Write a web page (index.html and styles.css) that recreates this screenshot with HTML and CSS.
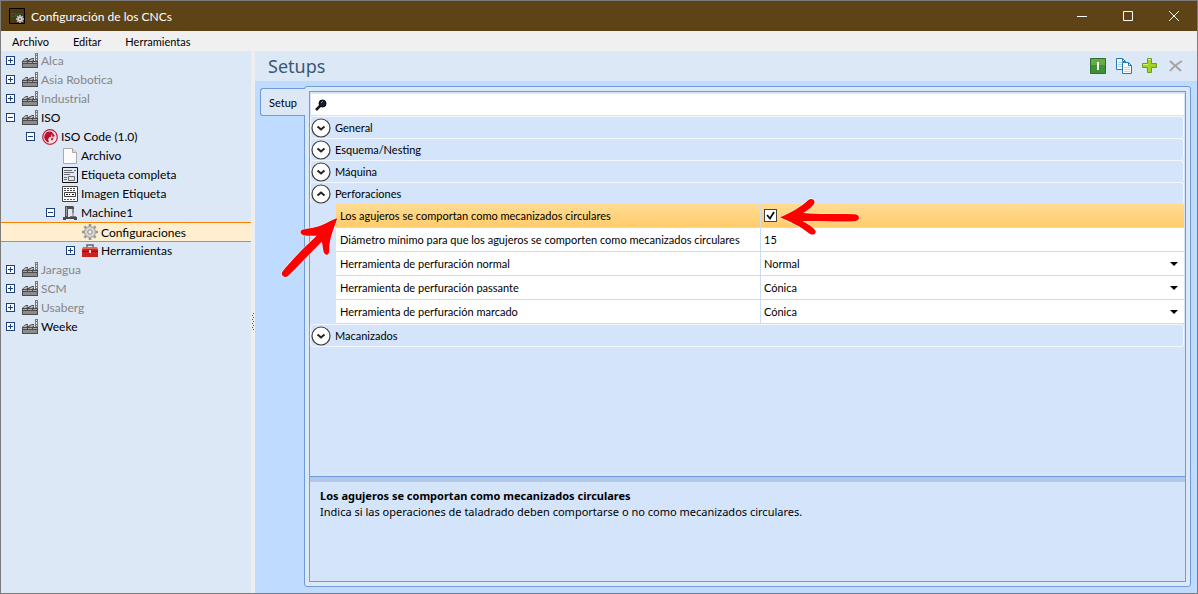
FILE: index.html
```html
<!DOCTYPE html>
<html lang="es">
<head>
    <meta charset="UTF-8">
    <meta name="viewport" content="width=device-width, initial-scale=1.0">
    <title>Configuración de los CNCs</title>
    <link rel="stylesheet" href="styles.css">
</head>
<body>
    <!-- Shared icons -->
    <svg class="icon-defs" aria-hidden="true">
        <symbol id="icon-factory" viewBox="0 0 16 16">
            <path d="M13 0h3v9h-3z" fill="#777"/>
            <path d="M14 1h1v1h-1zM14 3h1v2h-1zM14 6h1v1h-1z" fill="#e4e4e4"/>
            <path d="M0 8l4-3h2v2l4-2h2v3h4v7H0z" fill="#4c4c4c"/>
            <path d="M1 8l3-2h2L4 8zM7 8l3-2h2l-2 2z" fill="#c4c4c4"/>
            <path d="M1 9h4v1H1zM6 9h4v1H6zM11 9h4v1h-4z" fill="#a8a8a8"/>
            <path d="M1 11h14v3H1z" fill="#8c8c8c"/>
        </symbol>
        <symbol id="icon-chevron" viewBox="0 0 20 20">
            <circle cx="10" cy="10" r="9" fill="#fff" stroke="#3c3c3c" stroke-width="1.200"/>
            <path d="M6.500 8.500l3.500 3 3.500-3" fill="none" stroke="#222" stroke-width="2"/>
        </symbol>
    </svg>

    <div class="window">
        <header class="title-bar">
            <svg class="app-icon" viewBox="0 0 16 16">
                <path d="M.5.500h15v15H.500z" fill="#4a3716" stroke="#000"/>
                <path d="M5 5.500H2.500v3H5M6.500 9V5.500L9 9V5.500M13 5.500h-2.500v3" stroke="#087a20" fill="none"/>
                <path d="M11 7v8M7 11h8M8.200 8.200l5.600 5.600M13.800 8.200l-5.600 5.600" stroke="#c8c8c8" stroke-width="1.500"/>
                <circle cx="11" cy="11" r="2.500" fill="#eee" stroke="#aaa"/>
                <circle cx="11" cy="11" r="1" fill="#555"/>
            </svg>
            <h1>Configuración de los CNCs</h1>
            <div class="window-buttons">
                <button type="button" aria-label="Minimizar"><svg viewBox="0 0 12 12"><path d="M1 6.500h10"/></svg></button>
                <button type="button" aria-label="Maximizar"><svg viewBox="0 0 12 12"><path d="M1.500 1.500h9v9h-9z"/></svg></button>
                <button type="button" aria-label="Cerrar"><svg viewBox="0 0 12 12"><path d="M1 1l10 10M11 1L1 11"/></svg></button>
            </div>
        </header>

        <nav class="menu-bar">
            <button type="button">Archivo</button>
            <button type="button">Editar</button>
            <button type="button">Herramientas</button>
        </nav>

        <div class="workspace">
            <ul class="tree">
                <li class="node level-1 muted"><button type="button" class="expander plus" aria-label="Expandir"></button><svg class="node-icon"><use href="#icon-factory"/></svg><span>Alca</span></li>
                <li class="node level-1 muted"><button type="button" class="expander plus" aria-label="Expandir"></button><svg class="node-icon"><use href="#icon-factory"/></svg><span>Asia Robotica</span></li>
                <li class="node level-1 muted"><button type="button" class="expander plus" aria-label="Expandir"></button><svg class="node-icon"><use href="#icon-factory"/></svg><span>Industrial</span></li>
                <li class="node level-1"><button type="button" class="expander" aria-label="Contraer"></button><svg class="node-icon"><use href="#icon-factory"/></svg><span>ISO</span></li>
                <li class="node level-2"><button type="button" class="expander" aria-label="Contraer"></button>
                    <svg class="node-icon" viewBox="0 0 16 16">
                        <circle cx="8" cy="8" r="7.300" fill="#f1dfe6" stroke="#c41e3f" stroke-width="1.200"/>
                        <path d="M8 2.500a5.500 5.500 0 0 0-4 9.500l2 1.500 1-1-1-2 1.500-2.500H9V6l2-1-1-2z" fill="#b9112f"/>
                        <path d="M10.500 3.500l2.500 3-2 2-1.500-2zM9 9h2.500l-1 2.500-1.500-.5z" fill="#c22b48"/>
                    </svg><span>ISO Code (1.0)</span></li>
                <li class="node level-3"><i class="no-expander"></i>
                    <svg class="node-icon" viewBox="0 0 16 16">
                        <path d="M1.500.500h9l4 4v11h-13z" fill="#fbfbfb" stroke="#a9a9a9"/>
                        <path d="M10.500.500v4h4" fill="#ddd" stroke="#a9a9a9"/>
                    </svg><span>Archivo</span></li>
                <li class="node level-3"><i class="no-expander"></i>
                    <svg class="node-icon" viewBox="0 0 16 16">
                        <path d="M.5.500h15v15H.500z" fill="#e2e7ef" stroke="#111"/>
                        <path d="M2 3.500h8M2 5.500h10M2 7.500h6M2 10.500h3M2 12.500h3M12 3.500h2M6.500 9.500h6v4h-6z" fill="none" stroke="#6b6f75"/>
                    </svg><span>Etiqueta completa</span></li>
                <li class="node level-3"><i class="no-expander"></i>
                    <svg class="node-icon" viewBox="0 0 16 16">
                        <path d="M.5.500h15v15H.500z" fill="#fff" stroke="#444"/>
                        <path d="M2 2.500h12M2 4.500h12" stroke="#444" stroke-dasharray="2 1"/>
                        <path d="M2.500 6.500h11v4h-11z" fill="#fff" stroke="#444"/>
                        <path d="M4 8.500h2M7 8.500h1M10 8.500h2" stroke="#111"/>
                        <path d="M2 13.500h12" stroke="#d22" stroke-dasharray="2 1"/>
                    </svg><span>Imagen Etiqueta</span></li>
                <li class="node level-3"><button type="button" class="expander" aria-label="Contraer"></button>
                    <svg class="node-icon" viewBox="0 0 16 16">
                        <path d="M3 1h8l1 1v3h-2V4H6v8H3z" fill="#505050"/>
                        <path d="M4.500 2v9" stroke="#999"/>
                        <path d="M10 4h2v4h-2z" fill="#888"/>
                        <path d="M11 8v3M8 11.500h6" stroke="#777"/>
                        <path d="M1 12h14v3h-3v-1H4v1H1z" fill="#4b4b4b"/>
                    </svg><span>Machine1</span></li>
                <li class="node level-4 selected"><i class="no-expander"></i>
                    <svg class="node-icon" viewBox="0 0 16 16">
                        <path d="M8 0v16M0 8h16M2.400 2.400l11.200 11.200M13.600 2.400L2.400 13.600" stroke="#959595" stroke-width="2.600"/>
                        <circle cx="8" cy="8" r="5.500" fill="#d4d4d4" stroke="#a0a0a0"/>
                        <circle cx="8" cy="8" r="2.200" fill="#fff0d0" stroke="#8c8c8c"/>
                    </svg><span>Configuraciones</span></li>
                <li class="node level-4"><button type="button" class="expander plus" aria-label="Expandir"></button>
                    <svg class="node-icon" viewBox="0 0 16 16">
                        <path d="M5 4.500V2h6v2.500" fill="none" stroke="#666" stroke-width="1.500"/>
                        <path d="M1 4h14l1 3v7H0V7z" fill="#cf2020"/>
                        <path d="M1 4h14v2H1z" fill="#ea6258"/>
                        <path d="M0 8h16v1H0z" fill="#8f0c0c"/>
                        <path d="M7 7h2v3H7z" fill="#ddd"/>
                    </svg><span>Herramientas</span></li>
                <li class="node level-1 muted"><button type="button" class="expander plus" aria-label="Expandir"></button><svg class="node-icon"><use href="#icon-factory"/></svg><span>Jaragua</span></li>
                <li class="node level-1 muted"><button type="button" class="expander plus" aria-label="Expandir"></button><svg class="node-icon"><use href="#icon-factory"/></svg><span>SCM</span></li>
                <li class="node level-1 muted"><button type="button" class="expander plus" aria-label="Expandir"></button><svg class="node-icon"><use href="#icon-factory"/></svg><span>Usaberg</span></li>
                <li class="node level-1"><button type="button" class="expander plus" aria-label="Expandir"></button><svg class="node-icon"><use href="#icon-factory"/></svg><span>Weeke</span></li>
            </ul>

            <div class="splitter">
                <svg viewBox="0 0 4 20"><path d="M2 1h1v1H2zM1 3h1v1H1zM2 5h1v1H2zM1 7h1v1H1zM2 9h1v1H2zM1 11h1v1H1zM2 13h1v1H2zM1 15h1v1H1zM2 17h1v1H2z" fill="#36598c"/></svg>
            </div>

            <main class="content">
                <div class="content-header">
                    <h2>Setups</h2>
                    <div class="toolbar">
                        <button type="button" aria-label="Activar">
                            <svg viewBox="0 0 16 16">
                                <path d="M.5.500h15v15H.500z" fill="#3f9136" stroke="#2a7034"/>
                                <path d="M1 1h14v6H1z" fill="#65ad43"/>
                                <path d="M7 4h2v8H7z" fill="#fff"/>
                            </svg>
                        </button>
                        <button type="button" aria-label="Copiar">
                            <svg viewBox="0 0 16 16">
                                <path d="M.5.500h6l3 3v8h-9z" fill="#fff" stroke="#2478b5"/>
                                <path d="M6.500.500v3h3" fill="none" stroke="#2478b5"/>
                                <path d="M2 4.500h4M2 6.500h4M2 8.500h4" stroke="#a5cfe6"/>
                                <path d="M6.500 4.500h6l3 3v8h-9z" fill="#fff" stroke="#2478b5"/>
                                <path d="M12.500 4.500v3h3" fill="none" stroke="#2478b5"/>
                                <path d="M8 9.500h6M8 11.500h6M8 13.500h6" stroke="#b5d8ea"/>
                            </svg>
                        </button>
                        <button type="button" aria-label="Agregar">
                            <svg viewBox="0 0 16 16">
                                <path d="M5.500.500h4v5h5v4h-5v5h-4v-5h-5v-4h5z" fill="#a3d321" stroke="#69a01b"/>
                                <path d="M6 1.500h3M1 6.500h5" stroke="#d9f37e"/>
                            </svg>
                        </button>
                        <button type="button" aria-label="Eliminar" disabled>
                            <svg viewBox="0 0 16 16">
                                <path d="M2 3l11 10M14 3C9 6 5 9 2 13" fill="none" stroke="#a3a3a3" stroke-width="2"/>
                            </svg>
                        </button>
                    </div>
                </div>

                <div class="tab-area">
                    <button type="button" class="tab">Setup</button>
                    <section class="tab-page">
                        <div class="property-panel">
                            <label class="search">
                                <svg viewBox="0 0 12 12">
                                    <path d="M1 11l4-4" stroke="#1a1a1a" stroke-width="2.500"/>
                                    <circle cx="7.500" cy="4.500" r="3.500" fill="#17202a" stroke="#000"/>
                                    <path d="M6 4l2-2" stroke="#7893a5"/>
                                </svg>
                                <input type="text" aria-label="Buscar">
                            </label>

                            <div class="groups">
                                <button type="button" class="group"><svg><use href="#icon-chevron"/></svg>General</button>
                                <button type="button" class="group"><svg><use href="#icon-chevron"/></svg>Esquema/Nesting</button>
                                <button type="button" class="group"><svg><use href="#icon-chevron"/></svg>Máquina</button>
                                <button type="button" class="group open"><svg><use href="#icon-chevron"/></svg>Perforaciones</button>
                                <div class="properties">
                                    <div class="property active">
                                        <label for="holesAsMilling">Los agujeros se comportan como mecanizados circulares</label>
                                        <div class="value"><input type="checkbox" id="holesAsMilling" checked>
                                            <svg class="arrow arrow-check" viewBox="117 21 243 120"><path d="M120 82C150 70 185 50 205 30C215 22 228 30 222 42C212 55 200 62 190 69C240 74 290 70 345 73C362 76 360 92 345 94C290 96 240 92 187 93C205 103 220 112 227 123C228 134 215 137 207 130C180 108 150 95 120 82Z"/></svg>
                                        </div>
                                        <svg class="arrow arrow-label" viewBox="60 105 180 195"><path d="M232 115C210 120 190 138 165 142C150 146 128 147 123 152C118 162 128 167 140 167L170 167C130 205 95 240 67 275C60 288 75 296 84 288C115 258 150 220 185 185C190 200 188 215 195 222C203 228 209 220 208 205C208 175 222 145 232 115Z"/></svg>
                                    </div>
                                    <div class="property">
                                        <label for="minDiameter">Diámetro mínimo para que los agujeros se comporten como mecanizados circulares</label>
                                        <div class="value"><input type="text" id="minDiameter" value="15"></div>
                                    </div>
                                    <div class="property">
                                        <label for="toolNormal">Herramienta de perfuración normal</label>
                                        <div class="value"><select id="toolNormal"><option>Normal</option><option>Cónica</option></select></div>
                                    </div>
                                    <div class="property">
                                        <label for="toolThrough">Herramienta de perfuración passante</label>
                                        <div class="value"><select id="toolThrough"><option>Cónica</option><option>Normal</option></select></div>
                                    </div>
                                    <div class="property">
                                        <label for="toolMark">Herramienta de perfuración marcado</label>
                                        <div class="value"><select id="toolMark"><option>Cónica</option><option>Normal</option></select></div>
                                    </div>
                                </div>
                                <button type="button" class="group"><svg><use href="#icon-chevron"/></svg>Macanizados</button>
                            </div>

                            <div class="description">
                                <h3>Los agujeros se comportan como mecanizados circulares</h3>
                                <p>Indica si las operaciones de taladrado deben comportarse o no como mecanizados circulares.</p>
                            </div>
                        </div>
                    </section>
                </div>
            </main>
        </div>
    </div>
</body>
</html>
```
FILE: styles.css
```css
* {
    box-sizing: border-box;
}
body {
    margin: 0;
    font-family: Lato, "Noto Sans", sans-serif;
    font-size: 12px;
    color: #000;
}
button, input, select {
    font: inherit;
    color: inherit;
    border: none;
    background: none;
    padding: 0;
    margin: 0;
}
h1, h2, h3, p, ul {
    margin: 0;
    padding: 0;
}
svg {
    display: block;
    flex: none;
}
.icon-defs {
    display: none;
}
.window {
    display: flex;
    flex-direction: column;
    height: 100vh;
    border: 1px solid #7c7c7c;
}

/* Title bar */
.title-bar {
    display: flex;
    align-items: center;
    height: 30px;
    padding-left: 8px;
    background: #5e4316;
    color: #fff;
}
.app-icon {
    width: 16px;
    height: 16px;
}
.title-bar h1 {
    flex: 1;
    margin-left: 6px;
    font-size: 12px;
    font-weight: normal;
}
.window-buttons {
    display: flex;
}
.window-buttons button {
    display: flex;
    align-items: center;
    justify-content: center;
    width: 46px;
    height: 30px;
}
.window-buttons svg {
    width: 12px;
    height: 12px;
    fill: none;
    stroke: #fff;
}

/* Menu */
.menu-bar {
    display: flex;
    gap: 24px;
    height: 20px;
    padding-left: 11px;
    background: #f0f0f0;
    font-size: 11px;
}

.workspace {
    display: flex;
    flex: 1;
    min-height: 0;
}

/* Machine tree */
.tree {
    flex: none;
    width: 250px;
    background: #dde8f6;
    list-style: none;
}
.node {
    display: flex;
    align-items: center;
    height: 19px;
    padding-left: 5px;
    border: 0 solid #ff7f00;
    white-space: nowrap;
}
.level-2 {
    padding-left: 25px;
}
.level-3 {
    padding-left: 45px;
}
.level-4 {
    padding-left: 65px;
}
.muted {
    color: #858585;
}
.selected {
    height: 20px;
    margin-bottom: -1px;
    border-width: 1px 0;
    background: #ffefd0;
}
.expander {
    width: 9px;
    height: 9px;
    border: 1px solid #1d3f7a;
    background: linear-gradient(#1d3f7a, #1d3f7a) center / 5px 1px no-repeat #fff;
}
.expander.plus {
    background: linear-gradient(#1d3f7a, #1d3f7a) center / 5px 1px no-repeat, linear-gradient(#1d3f7a, #1d3f7a) center / 1px 5px no-repeat #fff;
}
.no-expander {
    width: 9px;
}
.node-icon {
    width: 16px;
    height: 16px;
    margin: 0 3px 0 7px;
}

.splitter {
    display: flex;
    align-items: center;
    width: 4px;
    background: #eeeeee;
}
.splitter svg {
    width: 4px;
    height: 20px;
}

/* Content */
.content {
    display: flex;
    flex-direction: column;
    flex: 1;
    min-width: 0;
    background: #bfdbff;
}
.content-header {
    display: flex;
    align-items: center;
    justify-content: space-between;
    height: 30px;
    padding: 0 13px;
    background: #dde8f6;
}
.content-header h2 {
    font-family: "Noto Sans", sans-serif;
    font-size: 18px;
    font-weight: normal;
    color: #395778;
}
.toolbar {
    display: flex;
    gap: 10px;
}
.toolbar svg {
    width: 16px;
    height: 16px;
}
.tab-area {
    display: flex;
    flex: 1;
    align-items: flex-start;
    min-height: 0;
    padding: 5px 6px 6px 5px;
}
.tab {
    width: 45px;
    height: 28px;
    margin: 2px -1px 0 0;
    border: 1px solid #6f9bd8;
    border-right: none;
    border-radius: 3px 0 0 3px;
    background: #dde8f6;
    font-size: 11px;
    z-index: 1;
}
.tab-page {
    display: flex;
    flex: 1;
    align-self: stretch;
    min-width: 0;
    padding: 4px;
    border: 1px solid #6f9bd8;
    border-radius: 3px;
    background: #dde8f6;
}
.property-panel {
    display: flex;
    flex-direction: column;
    flex: 1;
    min-width: 0;
    border: 1px solid #6f9bd8;
    background: #d4e5fb;
    font-size: 11px;
}
.search {
    display: flex;
    align-items: center;
    height: 21px;
    margin: 2px 1px 1px;
    padding-left: 4px;
    background: #fff;
}
.search svg {
    width: 12px;
    height: 12px;
}
.search input {
    flex: 1;
    outline: none;
}
.groups {
    flex: 1;
    padding-right: 1px;
}
.group {
    display: flex;
    align-items: center;
    gap: 4px;
    width: 100%;
    height: 22px;
    border: 1px solid #f4f8fe;
    border-bottom-width: 0;
    border-radius: 3px;
}
.group:last-child {
    height: 23px;
    border-bottom-width: 1px;
}
.group svg {
    width: 20px;
    height: 20px;
}
.group.open svg {
    transform: rotate(180deg);
}
.properties {
    margin-left: 26px;
}
.property {
    position: relative;
    display: grid;
    grid-template-columns: minmax(0, 1fr) minmax(0, 1fr);
    height: 24px;
    border-bottom: 1px solid #cbddf3;
    background: #fff;
    white-space: nowrap;
}
.property label {
    display: flex;
    align-items: center;
    padding-left: 4px;
}
.property.active {
    background: linear-gradient(#ffdc93, #ffcc6b);
}
.value {
    position: relative;
    display: flex;
    align-items: center;
    padding-left: 3px;
    border-left: 1px solid #cbddf3;
}
.value input[type="text"], .value select {
    flex: 1;
    height: 100%;
    outline: none;
}
.value select {
    appearance: none;
    background: url("data:image/svg+xml,%3Csvg xmlns='http://www.w3.org/2000/svg' width='8' height='4'%3E%3Cpath d='M0 0h8L4 4z'/%3E%3C/svg%3E") right 6px center no-repeat;
}
.value input[type="checkbox"] {
    appearance: none;
    width: 13px;
    height: 13px;
    border: 1px solid #444;
    background: #fff;
}
.value input[type="checkbox"]:checked {
    background: url("data:image/svg+xml,%3Csvg xmlns='http://www.w3.org/2000/svg' width='11' height='11'%3E%3Cpath d='M2 5l3 3.500L9 2' fill='none' stroke='%23111' stroke-width='1.800'/%3E%3C/svg%3E") #fff;
}

/* Red pointers drawn over the grid */
.arrow {
    position: absolute;
    z-index: 2;
    fill: #f00;
    pointer-events: none;
}
.arrow path {
    stroke: #fff;
    stroke-width: 4px;
    stroke-opacity: 0.7;
    paint-order: stroke;
}
.arrow-label {
    left: -56px;
    top: 11px;
    width: 60px;
    height: 65px;
}
.arrow-check {
    left: 18px;
    top: -7px;
    width: 81px;
    height: 40px;
}

.description {
    height: 105px;
    padding: 10px;
    border-top: 1px solid #6f9bd8;
    box-shadow: inset 0 5px #b1c8e8;
    font-family: "Noto Sans", sans-serif;
    line-height: 16px;
}
.description h3 {
    font-size: 11px;
    padding-top: 1px;
}
```
